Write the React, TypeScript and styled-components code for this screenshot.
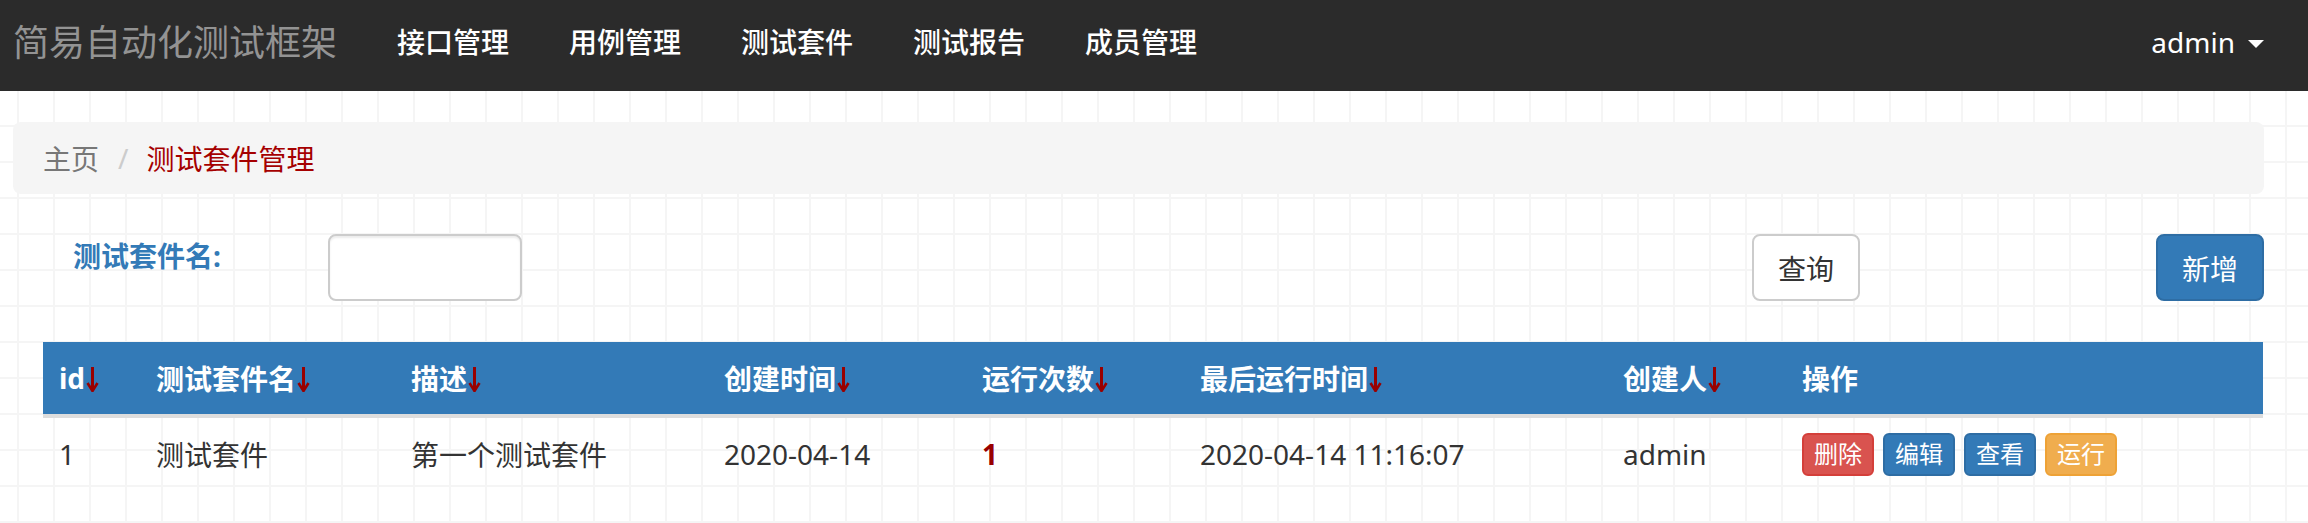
import styled, { createGlobalStyle } from 'styled-components';

const GlobalStyle = createGlobalStyle`
  html, body {
    margin: 0;
    padding: 0;
  }
  body {
    font-family: 'Noto Sans', 'Noto Sans CJK SC', sans-serif;
    color: #333;
    background-color: #fff;
    background-image:
      linear-gradient(#f5f5f5 2px, transparent 2px),
      linear-gradient(90deg, #f5f5f5 2px, transparent 2px);
    background-size: 36px 36px;
    background-position: 17px 17px;
    min-height: 523px;
  }
`;

const Navbar = styled.nav`
  display: flex;
  align-items: center;
  height: 91px;
  background: #2b2b2b;
  padding-right: 44px;
`;

const Brand = styled.div`
  padding: 0 30px 0 13px;
  font-size: 36px;
  line-height: 40px;
  color: #939393;
  margin-top: -6px;
`;

const NavLink = styled.a`
  padding: 0 30px;
  font-size: 28px;
  line-height: 40px;
  font-weight: 500;
  color: #fff;
  text-decoration: none;
  margin-top: -8px;
`;

const UserMenu = styled.div`
  margin-left: auto;
  display: flex;
  align-items: center;
  gap: 13px;
  font-size: 28px;
  line-height: 40px;
  color: #fff;
  margin-top: -8px;
`;

const Caret = styled.span`
  width: 0;
  height: 0;
  border-top: 8px solid #fff;
  border-left: 8px solid transparent;
  border-right: 8px solid transparent;
  margin-top: 4px;
`;

const Main = styled.main`
  padding: 31px 44px 0 13px;
`;

const Breadcrumb = styled.div`
  display: flex;
  align-items: center;
  height: 72px;
  padding: 0 30px;
  background: #f5f5f5;
  border-radius: 8px;
  font-size: 28px;
`;

const Crumb = styled.span<{ $active?: boolean }>`
  color: ${(p) => (p.$active ? '#a50000' : '#777')};
`;

const Divider = styled.span`
  color: #ccc;
  padding: 0 18px 0 19px;
`;

const FormRow = styled.div`
  display: flex;
  align-items: flex-start;
  margin-top: 40px;
`;

const Label = styled.label`
  width: 255px;
  margin-left: 60px;
  padding-top: 2px;
  font-size: 28px;
  line-height: 40px;
  font-weight: 700;
  color: #337ab7;
`;

const Input = styled.input`
  box-sizing: border-box;
  width: 194px;
  height: 67px;
  border: 2px solid #ccc;
  border-radius: 8px;
  box-shadow: inset 0 2px 2px rgba(0, 0, 0, 0.075);
  background: #fff;
  font-size: 28px;
  padding: 0 24px;
`;

const Button = styled.button<{ $primary?: boolean }>`
  box-sizing: border-box;
  height: 67px;
  padding: 0 24px;
  font-family: inherit;
  font-size: 28px;
  border-radius: 8px;
  border: 2px solid ${(p) => (p.$primary ? '#2e6da4' : '#ccc')};
  background: ${(p) => (p.$primary ? '#337ab7' : '#fff')};
  color: ${(p) => (p.$primary ? '#fff' : '#333')};
`;

const SearchButton = styled(Button)`
  margin-left: auto;
`;

const AddButton = styled(Button)`
  margin-left: 296px;
`;

const Table = styled.table`
  margin: 41px 0 0 30px;
  width: 2220px;
  table-layout: fixed;
  border-collapse: collapse;
  font-size: 28px;
`;

const Col = styled.col<{ $w: number }>`
  width: ${(p) => p.$w}px;
`;

const HeadCell = styled.th`
  height: 72px;
  padding: 0 16px;
  text-align: left;
  background: #337ab7;
  color: #fff;
  font-weight: 700;
  border-bottom: 4px solid #ddd;
  white-space: nowrap;
`;

const HeadInner = styled.span`
  display: inline-flex;
  align-items: center;
`;

const SortIcon = styled.svg`
  width: 13px;
  height: 26px;
  margin-left: 1px;
  margin-top: 2px;
`;

function SortArrow() {
  return (
    <SortIcon viewBox="0 0 13 26">
      <path d="M6.5 1 V23.5" stroke="#990000" strokeWidth="3" fill="none" />
      <path d="M1.5 17 L6.5 25 L11.5 17" stroke="#990000" strokeWidth="2.6" fill="none" />
    </SortIcon>
  );
}

const Cell = styled.td`
  height: 72px;
  padding: 0 16px;
  color: #333;
  white-space: nowrap;
`;

const Count = styled.span`
  color: #990000;
  font-weight: 700;
`;

const Actions = styled.div`
  display: flex;
  gap: 9px;
`;

const tones = {
  danger: ['#d9534f', '#d43f3a'],
  primary: ['#337ab7', '#2e6da4'],
  warning: ['#f0ad4e', '#eea236'],
};

const SmallButton = styled.button<{ $tone: keyof typeof tones }>`
  box-sizing: border-box;
  height: 43px;
  padding: 0 10px;
  font-family: inherit;
  font-size: 24px;
  line-height: 36px;
  color: #fff;
  border-radius: 6px;
  background: ${(p) => tones[p.$tone][0]};
  border: 2px solid ${(p) => tones[p.$tone][1]};
`;

const widths = [97, 255, 313, 258, 218, 423, 179, 477];
const headers: [string, boolean][] = [
  ['id', true],
  ['测试套件名', true],
  ['描述', true],
  ['创建时间', true],
  ['运行次数', true],
  ['最后运行时间', true],
  ['创建人', true],
  ['操作', false],
];

export default function App() {
  return (
    <>
      <GlobalStyle />
      <Navbar>
        <Brand>简易自动化测试框架</Brand>
        <NavLink>接口管理</NavLink>
        <NavLink>用例管理</NavLink>
        <NavLink>测试套件</NavLink>
        <NavLink>测试报告</NavLink>
        <NavLink>成员管理</NavLink>
        <UserMenu>
          admin
          <Caret />
        </UserMenu>
      </Navbar>
      <Main>
        <Breadcrumb>
          <Crumb>主页</Crumb>
          <Divider>/</Divider>
          <Crumb $active>测试套件管理</Crumb>
        </Breadcrumb>
        <FormRow>
          <Label>测试套件名:</Label>
          <Input />
          <SearchButton>查询</SearchButton>
          <AddButton $primary>新增</AddButton>
        </FormRow>
        <Table>
          <colgroup>
            {widths.map((w, i) => (
              <Col key={i} $w={w} />
            ))}
          </colgroup>
          <thead>
            <tr>
              {headers.map(([h, sortable]) => (
                <HeadCell key={h}>
                  <HeadInner>
                    {h}
                    {sortable && <SortArrow />}
                  </HeadInner>
                </HeadCell>
              ))}
            </tr>
          </thead>
          <tbody>
            <tr>
              <Cell>1</Cell>
              <Cell>测试套件</Cell>
              <Cell>第一个测试套件</Cell>
              <Cell>2020-04-14</Cell>
              <Cell>
                <Count>1</Count>
              </Cell>
              <Cell>2020-04-14 11:16:07</Cell>
              <Cell>admin</Cell>
              <Cell>
                <Actions>
                  <SmallButton $tone="danger">删除</SmallButton>
                  <SmallButton $tone="primary">编辑</SmallButton>
                  <SmallButton $tone="primary">查看</SmallButton>
                  <SmallButton $tone="warning">运行</SmallButton>
                </Actions>
              </Cell>
            </tr>
          </tbody>
        </Table>
      </Main>
    </>
  );
}
